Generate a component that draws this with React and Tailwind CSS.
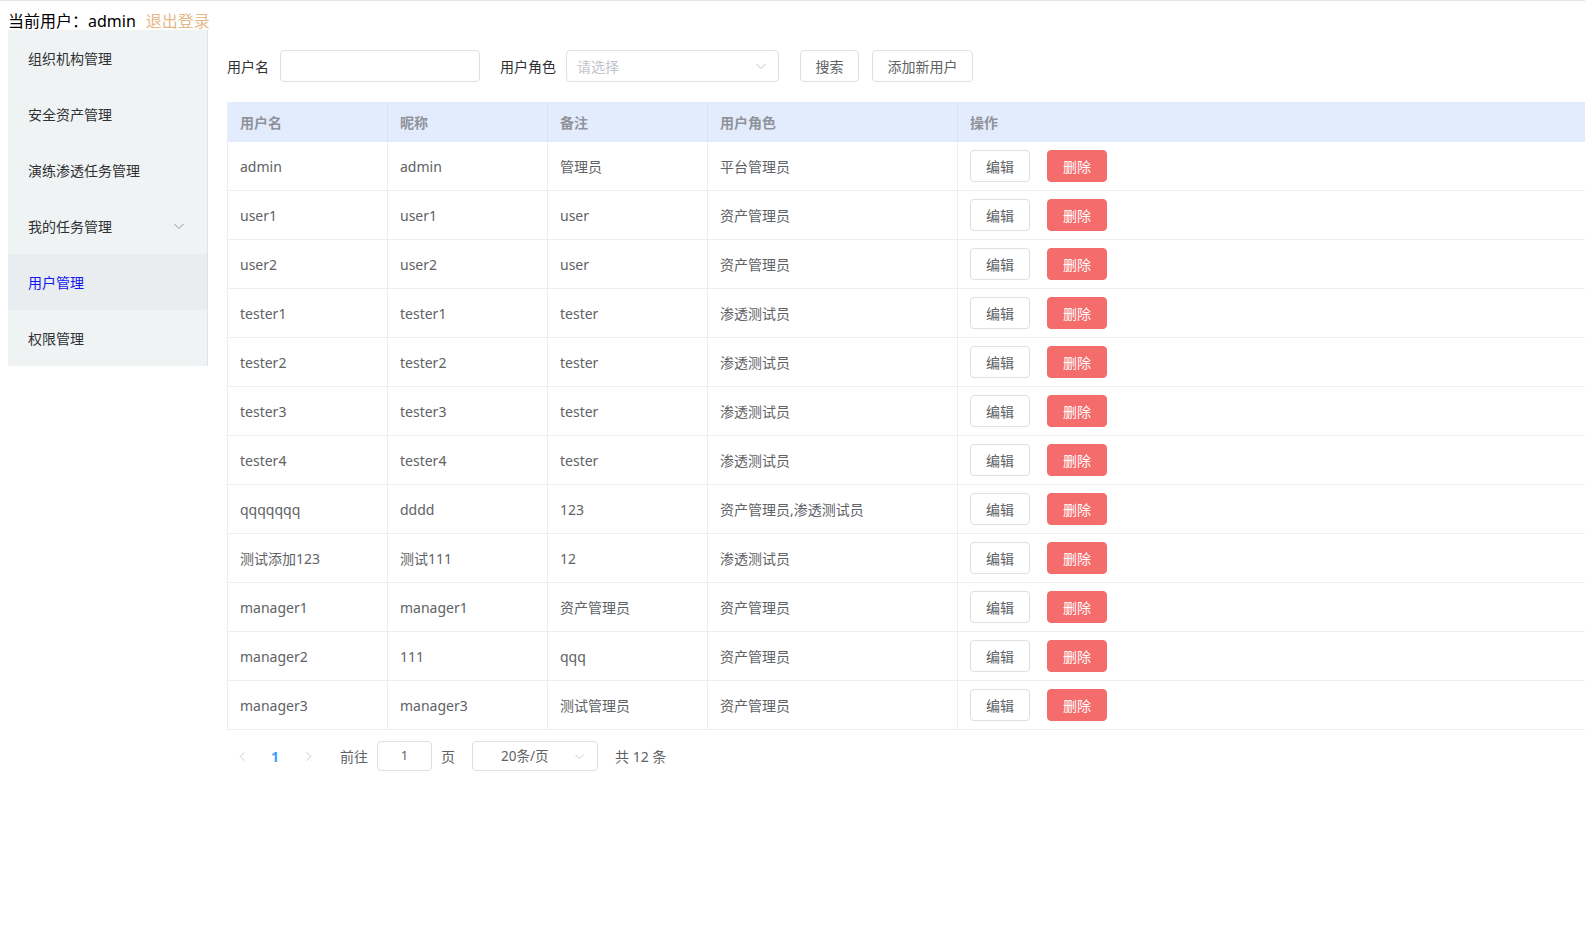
import React from "react";

const rows = [
  ["admin", "admin", "管理员", "平台管理员"],
  ["user1", "user1", "user", "资产管理员"],
  ["user2", "user2", "user", "资产管理员"],
  ["tester1", "tester1", "tester", "渗透测试员"],
  ["tester2", "tester2", "tester", "渗透测试员"],
  ["tester3", "tester3", "tester", "渗透测试员"],
  ["tester4", "tester4", "tester", "渗透测试员"],
  ["qqqqqqq", "dddd", "123", "资产管理员,渗透测试员"],
  ["测试添加123", "测试111", "12", "渗透测试员"],
  ["manager1", "manager1", "资产管理员", "资产管理员"],
  ["manager2", "111", "qqq", "资产管理员"],
  ["manager3", "manager3", "测试管理员", "资产管理员"],
];

const menu = ["组织机构管理", "安全资产管理", "演练渗透任务管理", "我的任务管理", "用户管理", "权限管理"];

function ChevronDown({ className }) {
  return (
    <svg viewBox="0 0 12 12" className={className} fill="none" stroke="currentColor" strokeWidth="1">
      <polyline points="1.5,4 6,8.5 10.5,4" />
    </svg>
  );
}

function ChevronLeft({ className }) {
  return (
    <svg viewBox="0 0 12 12" className={className} fill="none" stroke="currentColor" strokeWidth="1">
      <polyline points="8,1.5 3.5,6 8,10.5" />
    </svg>
  );
}

function ChevronRight({ className }) {
  return (
    <svg viewBox="0 0 12 12" className={className} fill="none" stroke="currentColor" strokeWidth="1">
      <polyline points="4,1.5 8.5,6 4,10.5" />
    </svg>
  );
}

export default function App() {
  return (
    <div
      className="min-h-[931px] bg-white border-t border-[#e5e5e5] text-[#606266]"
      style={{ fontFamily: '"Noto Sans", "Noto Sans CJK SC", sans-serif' }}
    >
      <div className="pt-[10px] pl-2 h-[29px] leading-[20px] text-[16px] text-black flex">
        <span>当前用户：admin</span>
        <span className="ml-[10px] text-[#e6b98a]">退出登录</span>
      </div>
      <div className="flex pl-2">
        <aside className="w-[200px] shrink-0 self-start bg-[#f0f3f4] border-r border-[#dfe2e6]">
          {menu.map((m, i) => (
            <div
              key={m}
              className={
                "h-[56px] pl-[20px] pr-[22px] flex items-center justify-between text-[14px] " +
                (i === 4 ? "bg-[#e9edf0] text-[#1414f0]" : "text-[#303133]")
              }
            >
              <span>{m}</span>
              {i === 3 && <ChevronDown className="w-[12px] h-[12px] text-[#909399]" />}
            </div>
          ))}
        </aside>
        <main className="flex-1 pl-[19px] pt-[20px]">
          <div className="flex items-center h-[32px] text-[14px]">
            <span className="text-[#303133] w-[53px]">用户名</span>
            <div className="w-[200px] h-[32px] border border-[#dcdfe6] rounded-[4px]" />
            <span className="ml-[20px] text-[#303133] w-[66px]">用户角色</span>
            <div className="w-[213px] h-[32px] border border-[#dcdfe6] rounded-[4px] flex items-center justify-between pl-[10px] pr-[11px]">
              <span className="text-[#c0c4cc]">请选择</span>
              <ChevronDown className="w-[12px] h-[12px] text-[#c0c4cc]" />
            </div>
            <button className="ml-[21px] w-[59px] h-[32px] border border-[#dcdfe6] rounded-[4px] text-[#606266] flex items-center justify-center">
              搜索
            </button>
            <button className="ml-[13px] w-[101px] h-[32px] border border-[#dcdfe6] rounded-[4px] text-[#606266] flex items-center justify-center">
              添加新用户
            </button>
          </div>

          <div className="mt-[20px] border-l border-[#ebeef5] text-[14px]">
            <div className="flex h-[40px] bg-[#e3ecfd] font-bold text-[#909399]">
              <div className="w-[160px] pl-3 flex items-center border-r border-[#d9e3f6]">用户名</div>
              <div className="w-[160px] pl-3 flex items-center border-r border-[#d9e3f6]">昵称</div>
              <div className="w-[160px] pl-3 flex items-center border-r border-[#d9e3f6]">备注</div>
              <div className="w-[250px] pl-3 flex items-center border-r border-[#d9e3f6]">用户角色</div>
              <div className="flex-1 pl-3 flex items-center">操作</div>
            </div>
            {rows.map((r, i) => (
              <div key={i} className="flex h-[49px] border-b border-[#ebeef5]">
                <div className="w-[160px] pl-3 flex items-center border-r border-[#ebeef5]">{r[0]}</div>
                <div className="w-[160px] pl-3 flex items-center border-r border-[#ebeef5]">{r[1]}</div>
                <div className="w-[160px] pl-3 flex items-center border-r border-[#ebeef5]">{r[2]}</div>
                <div className="w-[250px] pl-3 flex items-center border-r border-[#ebeef5]">{r[3]}</div>
                <div className="flex-1 pl-3 flex items-center gap-[17px]">
                  <button className="w-[60px] h-[32px] border border-[#dcdfe6] rounded-[4px] bg-white text-[#606266] flex items-center justify-center">
                    编辑
                  </button>
                  <button className="w-[60px] h-[32px] border border-[#f56c6c] rounded-[4px] bg-[#f56c6c] text-white flex items-center justify-center">
                    删除
                  </button>
                </div>
              </div>
            ))}
          </div>

          <div className="mt-[11px] flex items-center h-[30px] text-[14px] text-[#606266]">
            <div className="w-[30px] flex justify-center text-[#c0c4cc]">
              <ChevronLeft className="w-[11px] h-[11px]" />
            </div>
            <div className="w-[36px] text-center font-bold text-[#409eff]">1</div>
            <div className="w-[30px] flex justify-center text-[#c0c4cc]">
              <ChevronRight className="w-[11px] h-[11px]" />
            </div>
            <span className="ml-[17px]">前往</span>
            <div className="ml-[9px] w-[55px] h-[30px] border border-[#dcdfe6] rounded-[4px] flex items-center justify-center text-[13px]">
              1
            </div>
            <span className="ml-[9px]">页</span>
            <div className="ml-[17px] w-[126px] h-[30px] border border-[#dcdfe6] rounded-[4px] flex items-center justify-between pl-[28px] pr-[12px] text-[13.5px]">
              <span>20条/页</span>
              <ChevronDown className="w-[11px] h-[11px] text-[#c0c4cc]" />
            </div>
            <span className="ml-[17px]">共 12 条</span>
          </div>
        </main>
      </div>
    </div>
  );
}
